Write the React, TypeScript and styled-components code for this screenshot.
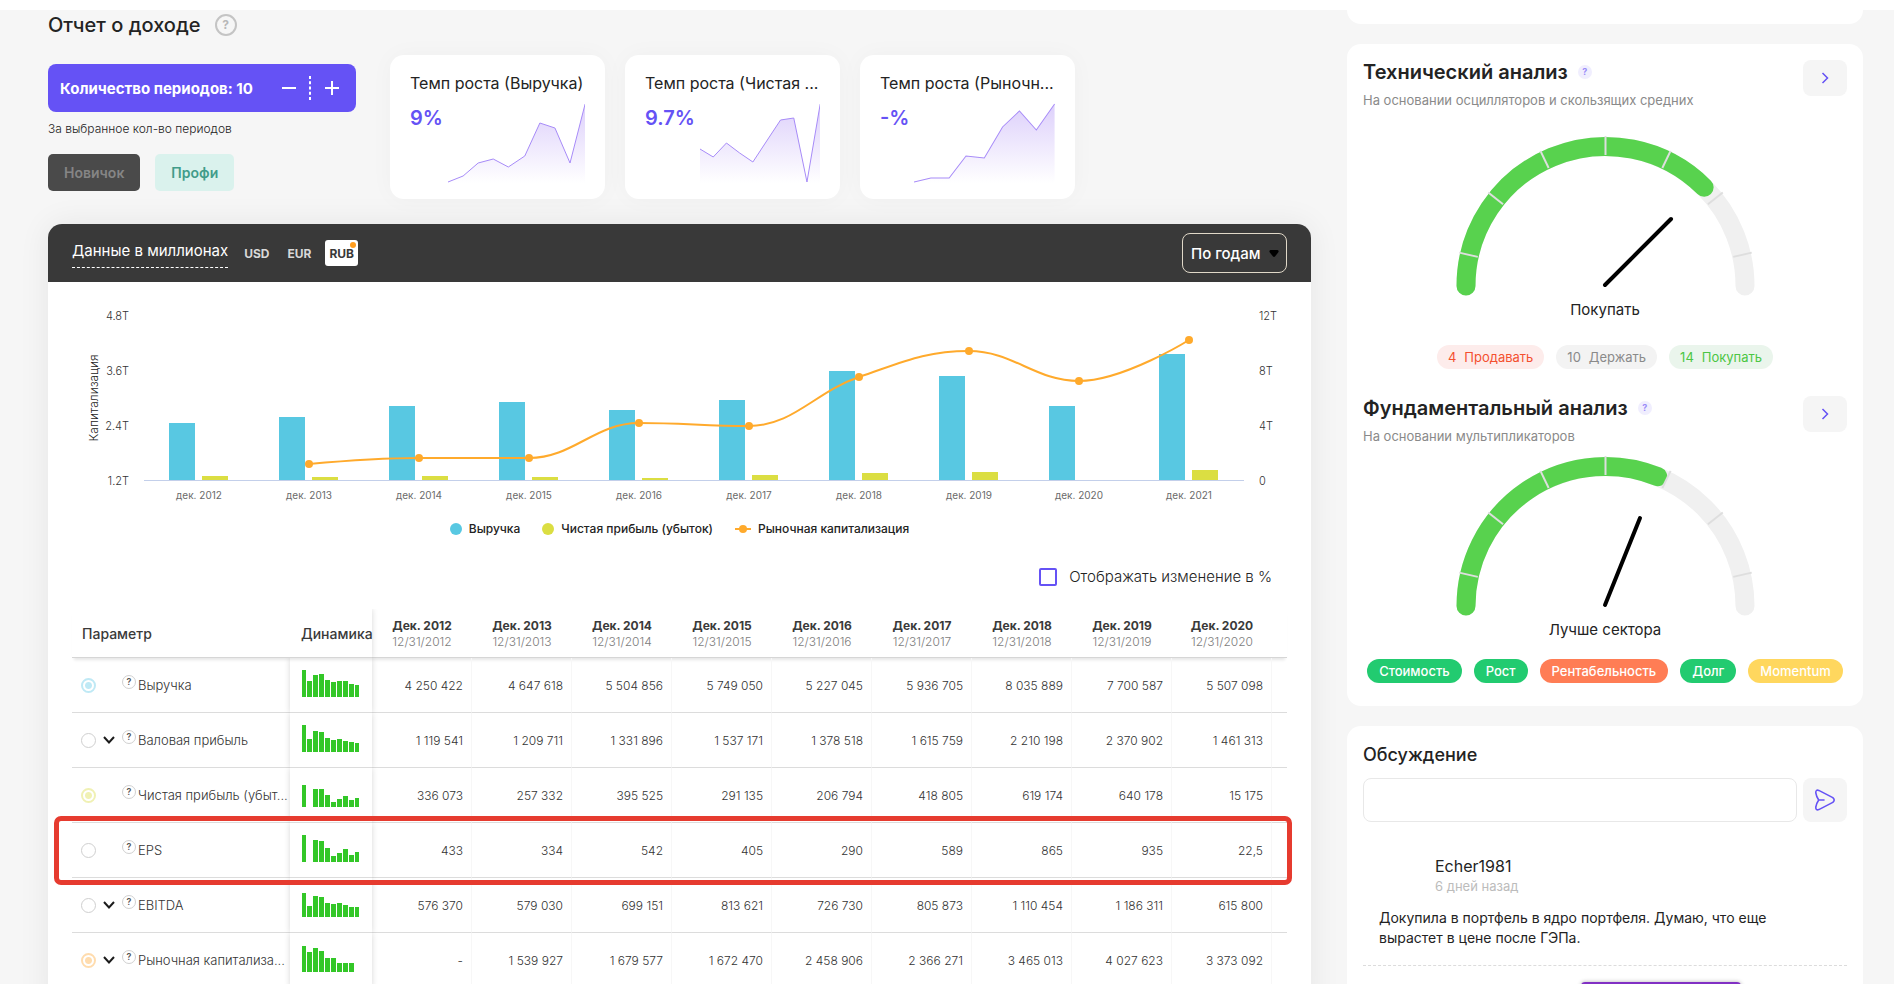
import React from "react";
import styled, { createGlobalStyle } from "styled-components";

const GlobalStyle = createGlobalStyle`
  *, *::before, *::after { box-sizing: border-box; }
  body { margin: 0; background: #f6f6f6; color: #232323; font-family: Inter, "Liberation Sans", sans-serif; }
  button, input, select { font-family: inherit; margin: 0; }
  button { cursor: pointer; border: 0; padding: 0; }
  h1, h2, p { margin: 0; }
`;

const Page = styled.div`
  height: 100vh;
  overflow: hidden;
`;

const TopStrip = styled.div`
  height: 10px;
  background: #fff;
`;

const Columns = styled.div`
  display: grid;
  grid-template-columns: minmax(0, 1fr) 516px;
  column-gap: 36px;
  padding: 0 31px 0 48px;
`;

const Main = styled.main`
  padding-top: 3px;
`;

const TitleRow = styled.div`
  display: flex;
  align-items: center;
  gap: 14px;
  height: 24px;
`;

const PageTitle = styled.h1`
  font-size: 20px;
  font-weight: 500;
  line-height: 24px;
`;

const TitleHelp = styled.button`
  width: 22px;
  height: 22px;
  border: 2px solid #c4c4c4;
  border-radius: 50%;
  background: transparent;
  color: #b8b8b8;
  font-size: 12px;
  font-weight: 700;
  line-height: 18px;
`;

const Controls = styled.section`
  display: flex;
  gap: 34px;
  margin-top: 18px;
`;

const PeriodColumn = styled.div`
  width: 308px;
  flex: none;
  padding-top: 9px;
`;

const Stepper = styled.div`
  display: flex;
  align-items: center;
  height: 48px;
  padding: 0 7px 0 12px;
  border-radius: 8px;
  background: #6552f5;
  color: #fff;
  font-size: 15px;
  font-weight: 700;
`;

const StepperLabel = styled.span`
  flex: 1;
  white-space: nowrap;
`;

const StepButton = styled.button`
  display: grid;
  place-items: center;
  width: 34px;
  height: 34px;
  background: transparent;
`;

const StepDivider = styled.svg`
  margin: 0 4px 0 3px;
`;

const Caption = styled.p`
  margin-top: 9px;
  font-size: 12px;
  font-weight: 300;
  line-height: 16px;
`;

const LevelRow = styled.div`
  display: flex;
  gap: 15px;
  margin-top: 17px;
`;

const LevelButton = styled.button<{ $active?: boolean }>`
  height: 37px;
  padding: 0 16px;
  border-radius: 5px;
  background: ${(p) => (p.$active ? "#4a4a4a" : "#daf2ed")};
  color: ${(p) => (p.$active ? "#858585" : "#429c8a")};
  font-size: 14px;
  font-weight: 600;
`;

const GrowthCards = styled.div`
  display: flex;
  gap: 20px;
`;

const GrowthCard = styled.article`
  display: flex;
  flex-direction: column;
  width: 215px;
  height: 144px;
  padding: 17px 20px 16px;
  border-radius: 14px;
  background: #fff;
  box-shadow: 0 0 24px rgba(0, 0, 0, 0.03);
`;

const GrowthTitle = styled.h2`
  font-size: 16px;
  font-weight: 400;
  line-height: 22px;
  white-space: nowrap;
`;

const GrowthBody = styled.div`
  display: flex;
  gap: 5px;
  margin-top: 9px;
`;

const GrowthValue = styled.span`
  color: #6552f5;
  font-size: 20px;
  font-weight: 600;
  line-height: 30px;
`;

const Sparkline = styled.svg`
  flex: 1;
  min-width: 0;
  height: 80px;
`;

const Panel = styled.section`
  margin-top: 25px;
  border-radius: 14px 14px 0 0;
  background: #fff;
  box-shadow: 0 0 32px rgba(0, 0, 0, 0.07);
`;

const PanelHeader = styled.header`
  display: flex;
  align-items: center;
  height: 58px;
  padding: 0 24px;
  border-radius: 14px 14px 0 0;
  background: #393939;
`;

const UnitLink = styled.a`
  margin-right: 12px;
  padding-bottom: 4px;
  border-bottom: 1px dashed #fff;
  color: #fff;
  font-size: 15px;
  line-height: 24px;
  text-decoration: none;
`;

const CurrencyGroup = styled.div`
  display: flex;
  flex: 1;
  gap: 10px;
`;

const CurrencyButton = styled.button<{ $active?: boolean }>`
  position: relative;
  height: 26px;
  padding: 0 4px;
  border-radius: 3px;
  background: ${(p) => (p.$active ? "#fff" : "transparent")};
  color: ${(p) => (p.$active ? "#393939" : "#d8d8d8")};
  font-size: 12px;
  font-weight: 700;
`;

const CurrencyDot = styled.span`
  position: absolute;
  top: 2px;
  right: 2px;
  width: 6px;
  height: 6px;
  border-radius: 50%;
  background: #ff9d1e;
`;

const SelectWrap = styled.div`
  position: relative;
`;

const PeriodSelect = styled.select`
  appearance: none;
  width: 105px;
  height: 40px;
  padding: 0 8px;
  border: 1px solid #e0d8c8;
  border-radius: 8px;
  background: transparent;
  color: #fff;
  font-size: 15px;
  font-weight: 500;
`;

const SelectArrow = styled.svg`
  position: absolute;
  top: 17px;
  right: 8px;
  pointer-events: none;
`;

const ChartSvg = styled.svg`
  display: block;
  width: 100%;
  height: auto;
  font-family: Inter, "Liberation Sans", sans-serif;
`;

const Legend = styled.div`
  display: flex;
  justify-content: center;
  gap: 22px;
  margin-top: 9px;
  font-size: 12px;
  font-weight: 500;
  line-height: 20px;
`;

const LegendItem = styled.span`
  display: flex;
  align-items: center;
  gap: 7px;
`;

const LegendDot = styled.i<{ $color: string }>`
  width: 12px;
  height: 12px;
  border-radius: 50%;
  background: ${(p) => p.$color};
`;

const ChangeRow = styled.div`
  display: flex;
  justify-content: flex-end;
  margin-top: 28px;
  padding-right: 39px;
`;

const ChangeLabel = styled.label`
  display: flex;
  align-items: center;
  gap: 12px;
  font-size: 15px;
  font-weight: 300;
  line-height: 20px;
`;

const CheckBox = styled.input`
  appearance: none;
  width: 18px;
  height: 18px;
  border: 2px solid #6552f5;
  border-radius: 2px;
  background: #fff;
  &:checked { background: #6552f5; }
`;

const TableWrap = styled.div`
  padding: 22px 24px 24px;
`;

const Table = styled.table`
  width: 100%;
  border-collapse: separate;
  border-spacing: 0;
  table-layout: fixed;
`;

const HeadRow = styled.tr`
  height: 49px;
  box-shadow: 0 4px 3px -2px rgba(0, 0, 0, 0.1);
`;

const HeadCell = styled.th<{ $align?: string; $pad?: string; $shade?: boolean }>`
  padding: ${(p) => p.$pad || "2px 0 0"};
  border-bottom: 1px solid #d6d6d6;
  box-shadow: ${(p) => (p.$shade ? "0 0 6px rgba(0, 0, 0, 0.16)" : "none")};
  clip-path: ${(p) => (p.$shade ? "inset(0 -6px 0 0)" : "none")};
  color: #3a3a3a;
  font-size: 14px;
  font-weight: 500;
  text-align: ${(p) => p.$align || "left"};
  vertical-align: middle;
`;

const YearName = styled.div`
  font-size: 12px;
  font-weight: 700;
  line-height: 16px;
`;

const YearDate = styled.div`
  color: #7d7d7d;
  font-size: 12px;
  font-weight: 300;
  line-height: 16px;
`;

const BodyRow = styled.tr`
  position: relative;
  height: 55px;
`;

const ParamCell = styled.th`
  padding: 0 0 0 9px;
  border-bottom: 1px solid #dcdcdc;
  color: #333;
  font-weight: 300;
  text-align: left;
`;

const ParamContent = styled.div`
  display: flex;
  align-items: center;
`;

const SeriesToggle = styled.input<{ $color: string }>`
  appearance: none;
  flex: none;
  width: 15px;
  height: 15px;
  border: 1px solid #cfcfcf;
  border-radius: 50%;
  background: #fff;
  &:checked {
    border: 2px solid ${(p) => p.$color};
    background: radial-gradient(circle, ${(p) => p.$color} 0 3px, #fff 4px);
  }
`;

const ExpandSlot = styled.span`
  display: flex;
  width: 26px;
  flex: none;
  justify-content: center;
`;

const ExpandButton = styled.button`
  display: grid;
  width: 14px;
  height: 14px;
  place-items: center;
  background: transparent;
`;

const RowHelp = styled.button`
  flex: none;
  width: 14px;
  height: 14px;
  margin: 0 2px 6px 0;
  border: 1px solid #d0d0d0;
  border-radius: 50%;
  background: transparent;
  color: #555;
  font-size: 9px;
  font-weight: 600;
  line-height: 12px;
`;

const ParamName = styled.span`
  font-size: 13px;
  line-height: 18px;
  white-space: nowrap;
`;

const TrendCell = styled.td`
  padding: 0 0 4px 12px;
  border-bottom: 1px solid #dcdcdc;
  box-shadow: 0 0 6px rgba(0, 0, 0, 0.16);
  clip-path: inset(0 -6px);
  line-height: 0;
`;

const ValueCell = styled.td`
  padding: 0 8px 0 0;
  border-right: 1px solid #f7f7f7;
  border-bottom: 1px solid #dcdcdc;
  color: #333;
  font-size: 12px;
  font-weight: 300;
  text-align: right;
`;

const FillCell = styled.td`
  border-bottom: 1px solid #dcdcdc;
`;

const RowFrame = styled.span`
  position: absolute;
  z-index: 1;
  inset: -7px -5px -7px -18px;
  border: 5px solid #e63b2f;
  border-radius: 7px;
  pointer-events: none;
`;

const Aside = styled.aside`
  display: flex;
  flex-direction: column;
  gap: 20px;
`;

const CardTail = styled.div`
  height: 14px;
  border-radius: 0 0 14px 14px;
  background: #fff;
`;

const Card = styled.section`
  padding: 16px 16px 23px;
  border-radius: 14px;
  background: #fff;
`;

const Analysis = styled.div`
  & + & { margin-top: 27px; }
`;

const AnalysisHead = styled.div`
  display: flex;
  justify-content: space-between;
`;

const AnalysisTitle = styled.h2`
  display: flex;
  align-items: center;
  gap: 10px;
  font-size: 20px;
  font-weight: 600;
  line-height: 24px;
`;

const LilacHelp = styled.button`
  width: 14px;
  height: 14px;
  border-radius: 50%;
  background: #f0eefe;
  color: #9a8cf8;
  font-size: 9px;
  font-weight: 700;
  line-height: 14px;
`;

const AnalysisNote = styled.p`
  margin-top: 8px;
  color: #8a8a8a;
  font-size: 13px;
  line-height: 16px;
`;

const SquareButton = styled.button<{ $tall?: boolean }>`
  display: grid;
  flex: none;
  width: 44px;
  height: ${(p) => (p.$tall ? 44 : 36)}px;
  place-items: center;
  border-radius: 8px;
  background: #f5f5f5;
`;

const GaugeSvg = styled.svg<{ $gap: number }>`
  display: block;
  width: 300px;
  height: 160px;
  margin: ${(p) => p.$gap}px auto 0;
`;

const GaugeLabel = styled.p`
  margin-top: 4px;
  font-size: 15px;
  line-height: 20px;
  text-align: center;
`;

const Pills = styled.div<{ $gap: number }>`
  display: flex;
  justify-content: center;
  gap: 12px;
  margin-top: ${(p) => p.$gap}px;
`;

const Pill = styled.span<{ $bg: string; $fg: string; $strong?: boolean }>`
  display: flex;
  gap: 8px;
  padding: 0 ${(p) => (p.$strong ? 12 : 11)}px;
  border-radius: 12px;
  background: ${(p) => p.$bg};
  color: ${(p) => p.$fg};
  font-size: 13px;
  font-weight: ${(p) => (p.$strong ? 500 : 400)};
  line-height: 24px;
`;

const DiscussionTitle = styled.h2`
  margin-top: 1px;
  font-size: 18px;
  font-weight: 500;
  line-height: 24px;
`;

const MessageForm = styled.form`
  display: flex;
  gap: 6px;
  margin-top: 11px;
`;

const MessageInput = styled.input`
  flex: 1;
  min-width: 0;
  height: 44px;
  padding: 0 12px;
  border: 1px solid #e8e8e8;
  border-radius: 8px;
  background: #fff;
  font-size: 15px;
`;

const Comment = styled.article`
  padding: 34px 16px 17px;
  border-bottom: 1px dashed #dcdcdc;
`;

const CommentHead = styled.div`
  padding-left: 56px;
`;

const Author = styled.div`
  font-size: 16px;
  font-weight: 400;
  line-height: 20px;
`;

const When = styled.div`
  color: #bcbcbc;
  font-size: 13px;
  line-height: 20px;
`;

const CommentText = styled.p`
  margin-top: 12px;
  font-size: 14px;
  line-height: 20px;
`;

const MoreButton = styled.button`
  display: block;
  width: 160px;
  height: 40px;
  margin: 16px 106px 0 auto;
  border-radius: 4px;
  background: #8130c4;
  box-shadow: 0 0 4px rgba(0, 0, 0, 0.3);
`;

type Point = [number, number];

const growth: { title: string; value: string; points: Point[] }[] = [
  {
    title: "Темп роста (Выручка)",
    value: "9%",
    points: [[0, 79], [11, 73], [22, 60], [33, 56], [44, 64], [56, 53], [67, 20], [78, 25], [89, 60], [100, 1]],
  },
  {
    title: "Темп роста (Чистая ...",
    value: "9.7%",
    points: [[0, 46], [11, 54], [22, 40], [33, 50], [44, 59], [56, 37], [67, 17], [78, 15], [89, 79], [100, 1]],
  },
  {
    title: "Темп роста (Рыночн...",
    value: "-%",
    points: [[0, 79], [12, 75], [25, 75], [37, 53], [50, 55], [63, 24], [75, 8], [87, 27], [100, 1]],
  },
];

const years = [2012, 2013, 2014, 2015, 2016, 2017, 2018, 2019, 2020, 2021];
const revenueHeights = [57, 63, 74, 78, 70, 80, 109, 104, 74, 126];
const profitHeights = [4, 3, 4, 3, 2, 5, 7, 8, 0, 10];
const capPoints: Point[] = [182, 176, 176, 141, 144, 95, 69, 99, 58].map((y, i) => [261 + i * 110, y]);

/* Smooth curve through all points, with flat tangents kept inside each segment. */
function spline(points: Point[]): string {
  let path = `M${points[0][0]} ${points[0][1]}`;
  let prevRight: Point = points[0];
  for (let i = 1; i < points.length; i++) {
    const [x, y] = points[i];
    let left: Point = [x, y];
    let right: Point = [x, y];
    if (i < points.length - 1) {
      const [lx, ly] = points[i - 1];
      const [nx, ny] = points[i + 1];
      const lcx = (1.5 * x + lx) / 2.5;
      let lcy = (1.5 * y + ly) / 2.5;
      const rcx = (1.5 * x + nx) / 2.5;
      let rcy = (1.5 * y + ny) / 2.5;
      const correction = ((rcy - lcy) * (rcx - x)) / (rcx - lcx) + y - rcy;
      lcy += correction;
      rcy += correction;
      if (lcy > ly && lcy > y) { lcy = Math.max(ly, y); rcy = 2 * y - lcy; }
      else if (lcy < ly && lcy < y) { lcy = Math.min(ly, y); rcy = 2 * y - lcy; }
      if (rcy > ny && rcy > y) { rcy = Math.max(ny, y); lcy = 2 * y - rcy; }
      else if (rcy < ny && rcy < y) { rcy = Math.min(ny, y); lcy = 2 * y - rcy; }
      left = [lcx, lcy];
      right = [rcx, rcy];
    }
    path += ` C${prevRight[0]} ${prevRight[1]} ${left[0]} ${left[1]} ${x} ${y}`;
    prevRight = right;
  }
  return path;
}

type Row = { name: string; color?: string; expand?: boolean; framed?: boolean; trend: number[]; values: string[] };

const rows: Row[] = [
  {
    name: "Выручка", color: "#bfe9f5", trend: [27, 16, 22, 23, 17, 15, 16, 16, 13, 12],
    values: ["4 250 422", "4 647 618", "5 504 856", "5 749 050", "5 227 045", "5 936 705", "8 035 889", "7 700 587", "5 507 098"],
  },
  {
    name: "Валовая прибыль", expand: true, trend: [27, 13, 21, 20, 14, 12, 13, 11, 10, 9],
    values: ["1 119 541", "1 209 711", "1 331 896", "1 537 171", "1 378 518", "1 615 759", "2 210 198", "2 370 902", "1 461 313"],
  },
  {
    name: "Чистая прибыль (убыт...", color: "#f0f1b4", trend: [22, 0, 18, 18, 12, 5, 8, 11, 7, 9],
    values: ["336 073", "257 332", "395 525", "291 135", "206 794", "418 805", "619 174", "640 178", "15 175"],
  },
  {
    name: "EPS", framed: true, trend: [27, 0, 22, 21, 14, 6, 9, 13, 7, 10],
    values: ["433", "334", "542", "405", "290", "589", "865", "935", "22,5"],
  },
  {
    name: "EBITDA", expand: true, trend: [24, 11, 21, 20, 14, 13, 14, 12, 10, 10],
    values: ["576 370", "579 030", "699 151", "813 621", "726 730", "805 873", "1 110 454", "1 186 311", "615 800"],
  },
  {
    name: "Рыночная капитализа...", color: "#ffdcae", expand: true, trend: [26, 20, 24, 21, 14, 14, 9, 9, 9, 0],
    values: ["-", "1 539 927", "1 679 577", "1 672 470", "2 458 906", "2 366 271", "3 465 013", "4 027 623", "3 373 092"],
  },
];

function IncomeChart() {
  return (
    <ChartSvg viewBox="0 0 1263 228" role="img" aria-label="Выручка, чистая прибыль и капитализация">
      <g fontSize="11" fontWeight="300" fill="#333">
        {["4.8T", "3.6T", "2.4T", "1.2T"].map((t, i) => (
          <text key={t} x="81" y={38 + i * 55} textAnchor="end">{t}</text>
        ))}
        {["12T", "8T", "4T", "0"].map((t, i) => (
          <text key={t} x="1211" y={38 + i * 55}>{t}</text>
        ))}
      </g>
      <text transform="translate(50 116) rotate(-90)" textAnchor="middle" fontSize="12" fontWeight="300" fill="#222">
        Капитализация
      </text>
      {years.map((year, i) => (
        <g key={year}>
          <rect x={121 + i * 110} y={198 - revenueHeights[i]} width="26" height={revenueHeights[i]} fill="#58c8e2" />
          <rect x={154 + i * 110} y={198 - profitHeights[i]} width="26" height={profitHeights[i]} fill="#dbde42" />
          <text x={151 + i * 110} y="217" textAnchor="middle" fontSize="10" fill="#6a6a6a">{`дек. ${year}`}</text>
        </g>
      ))}
      <path d="M96 198.500H1196" stroke="#c3cfea" />
      <path d={spline(capPoints)} fill="none" stroke="#ffaa2c" strokeWidth="2" />
      {capPoints.map(([x, y]) => <circle key={x} cx={x} cy={y} r="4" fill="#ffaa2c" />)}
    </ChartSvg>
  );
}

function Gauge({ degrees, needle, gap }: { degrees: number; needle: Point; gap: number }) {
  const at = (deg: number, r: number) => {
    const a = (deg * Math.PI) / 180;
    return `${(150.5 - r * Math.cos(a)).toFixed(2)} ${(150 - r * Math.sin(a)).toFixed(2)}`;
  };
  return (
    <GaugeSvg $gap={gap} viewBox="0 0 300 160" aria-hidden="true">
      <g fill="none" strokeWidth="19" strokeLinecap="round">
        <path d={`M${at(0, 139.5)} A139.500 139.500 0 0 1 ${at(180, 139.5)}`} stroke="#f0f0f0" />
        <path d={`M${at(0, 139.5)} A139.500 139.500 0 0 1 ${at(degrees, 139.5)}`} stroke="#58d24e" />
      </g>
      {[0, 1, 2, 3, 4, 5, 6].map((i) => {
        const deg = (i + 0.5) * (180 / 7);
        return <path key={i} d={`M${at(deg, 131)} L${at(deg, 150)}`} stroke="#dedede" strokeWidth="2" />;
      })}
      <path d={`M150 149L${needle[0]} ${needle[1]}`} stroke="#000" strokeWidth="4" strokeLinecap="round" />
    </GaugeSvg>
  );
}

function ChevronRight() {
  return (
    <svg width="8" height="12" viewBox="0 0 8 12" fill="none" stroke="#6552f5" strokeWidth="1.500" aria-hidden="true">
      <path d="M1.500 1L6.500 6L1.500 11" />
    </svg>
  );
}

function AnalysisHeader({ title, note }: { title: string; note: string }) {
  return (
    <AnalysisHead>
      <div>
        <AnalysisTitle>
          {title}
          <LilacHelp type="button">?</LilacHelp>
        </AnalysisTitle>
        <AnalysisNote>{note}</AnalysisNote>
      </div>
      <SquareButton type="button" aria-label={title}><ChevronRight /></SquareButton>
    </AnalysisHead>
  );
}

export default function App() {
  return (
    <Page>
      <GlobalStyle />
      <TopStrip />
      <Columns>
        <Main>
          <TitleRow>
            <PageTitle>Отчет о доходе</PageTitle>
            <TitleHelp type="button">?</TitleHelp>
          </TitleRow>

          <Controls>
            <PeriodColumn>
              <Stepper>
                <StepperLabel>Количество периодов: 10</StepperLabel>
                <StepButton type="button" aria-label="Меньше">
                  <svg width="14" height="14" stroke="#fff" strokeWidth="2"><path d="M0 7H14" /></svg>
                </StepButton>
                <StepDivider width="2" height="24" aria-hidden="true">
                  <path d="M1 0V24" stroke="#fff" strokeWidth="2" strokeDasharray="3 2.250" />
                </StepDivider>
                <StepButton type="button" aria-label="Больше">
                  <svg width="14" height="14" stroke="#fff" strokeWidth="2"><path d="M0 7H14M7 0V14" /></svg>
                </StepButton>
              </Stepper>
              <Caption>За выбранное кол-во периодов</Caption>
              <LevelRow>
                <LevelButton type="button" $active>Новичок</LevelButton>
                <LevelButton type="button">Профи</LevelButton>
              </LevelRow>
            </PeriodColumn>
            <GrowthCards>
              {growth.map((g, i) => {
                const line = g.points.map((p) => p.join(" ")).join("L");
                return (
                  <GrowthCard key={g.title}>
                    <GrowthTitle>{g.title}</GrowthTitle>
                    <GrowthBody>
                      <GrowthValue>{g.value}</GrowthValue>
                      <Sparkline viewBox="0 0 100 80" preserveAspectRatio="none" aria-hidden="true">
                        <defs>
                          <linearGradient id={`fade${i}`} x1="0" y1="0" x2="0" y2="1">
                            <stop offset="0" stopColor="#ddd0fb" />
                            <stop offset="1" stopColor="#fff" />
                          </linearGradient>
                        </defs>
                        <path d={`M${line}V80H0Z`} fill={`url(#fade${i})`} />
                        <path d={`M${line}`} fill="none" stroke="#a78bf8" vectorEffect="non-scaling-stroke" />
                      </Sparkline>
                    </GrowthBody>
                  </GrowthCard>
                );
              })}
            </GrowthCards>
          </Controls>

          <Panel>
            <PanelHeader>
              <UnitLink href="#units">Данные в миллионах</UnitLink>
              <CurrencyGroup>
                <CurrencyButton type="button">USD</CurrencyButton>
                <CurrencyButton type="button">EUR</CurrencyButton>
                <CurrencyButton type="button" $active>RUB<CurrencyDot /></CurrencyButton>
              </CurrencyGroup>
              <SelectWrap>
                <PeriodSelect aria-label="Период" defaultValue="year">
                  <option value="year">По годам</option>
                </PeriodSelect>
                <SelectArrow width="10" height="7" viewBox="0 0 10 7" aria-hidden="true">
                  <path d="M1.500 0H8.500Q10 .5 9.500 2L6 6.500Q5 7.300 4 6.500L.5 2Q0 .5 1.500 0Z" fill="#000" />
                </SelectArrow>
              </SelectWrap>
            </PanelHeader>

            <IncomeChart />
            <Legend>
              <LegendItem><LegendDot $color="#58c8e2" />Выручка</LegendItem>
              <LegendItem><LegendDot $color="#dbde42" />Чистая прибыль (убыток)</LegendItem>
              <LegendItem>
                <svg width="16" height="10" aria-hidden="true">
                  <path d="M0 5H16" stroke="#ffaa2c" strokeWidth="2" />
                  <circle cx="8" cy="5" r="4" fill="#ffaa2c" />
                </svg>
                Рыночная капитализация
              </LegendItem>
            </Legend>

            <ChangeRow>
              <ChangeLabel><CheckBox type="checkbox" />Отображать изменение в %</ChangeLabel>
            </ChangeRow>

            <TableWrap>
              <Table>
                <colgroup>
                  <col style={{ width: 218 }} />
                  <col style={{ width: 82 }} />
                  {years.slice(0, 9).map((y) => <col key={y} style={{ width: 100 }} />)}
                  <col />
                </colgroup>
                <thead>
                  <HeadRow>
                    <HeadCell $pad="0 0 0 10px">Параметр</HeadCell>
                    <HeadCell $pad="0 0 0 11px" $shade>Динамика</HeadCell>
                    {years.slice(0, 9).map((y) => (
                      <HeadCell key={y} $align="center">
                        <YearName>{`Дек. ${y}`}</YearName>
                        <YearDate>{`12/31/${y}`}</YearDate>
                      </HeadCell>
                    ))}
                    <HeadCell as="td" />
                  </HeadRow>
                </thead>
                <tbody>
                  {rows.map((row) => (
                    <BodyRow key={row.name}>
                      <ParamCell scope="row">
                        <ParamContent>
                          <SeriesToggle type="checkbox" aria-label={row.name} defaultChecked={!!row.color} $color={row.color || "#bfe9f5"} />
                          <ExpandSlot>
                            {row.expand && (
                              <ExpandButton type="button" aria-label="Развернуть">
                                <svg width="12" height="8" fill="none" stroke="#1c1c1c" strokeWidth="2"><path d="M1 1L6 6.500L11 1" /></svg>
                              </ExpandButton>
                            )}
                          </ExpandSlot>
                          <RowHelp type="button">?</RowHelp>
                          <ParamName>{row.name}</ParamName>
                        </ParamContent>
                        {row.framed && <RowFrame />}
                      </ParamCell>
                      <TrendCell>
                        <svg width="58" height="28" fill="#33c728" aria-hidden="true">
                          {row.trend.map((h, i) => (
                            <rect key={i} x={i === 0 ? 0 : i * 6 - 1} y={28 - h} width={i === 0 || i === 9 ? 4 : 5} height={h} />
                          ))}
                        </svg>
                      </TrendCell>
                      {row.values.map((v, i) => <ValueCell key={i}>{v}</ValueCell>)}
                      <FillCell />
                    </BodyRow>
                  ))}
                </tbody>
              </Table>
            </TableWrap>
          </Panel>
        </Main>

        <Aside>
          <CardTail />
          <Card>
            <Analysis>
              <AnalysisHeader title="Технический анализ" note="На основании осцилляторов и скользящих средних" />
              <Gauge degrees={135} needle={[216, 83]} gap={28} />
              <GaugeLabel>Покупать</GaugeLabel>
              <Pills $gap={25}>
                <Pill $bg="#fdeceb" $fg="#f4502f"><span>4</span><span>Продавать</span></Pill>
                <Pill $bg="#f3f3f3" $fg="#8a8a8a"><span>10</span><span>Держать</span></Pill>
                <Pill $bg="#eaf5ec" $fg="#4cc644"><span>14</span><span>Покупать</span></Pill>
              </Pills>
            </Analysis>
            <Analysis>
              <AnalysisHeader title="Фундаментальный анализ" note="На основании мультипликаторов" />
              <Gauge degrees={112} needle={[185, 62]} gap={12} />
              <GaugeLabel>Лучше сектора</GaugeLabel>
              <Pills $gap={19}>
                <Pill $strong $bg="#22cb70" $fg="#fff">Стоимость</Pill>
                <Pill $strong $bg="#22cb70" $fg="#fff">Рост</Pill>
                <Pill $strong $bg="#ff7d55" $fg="#fff">Рентабельность</Pill>
                <Pill $strong $bg="#22cb70" $fg="#fff">Долг</Pill>
                <Pill $strong $bg="#ffd75e" $fg="#fff">Momentum</Pill>
              </Pills>
            </Analysis>
          </Card>
          <Card>
            <DiscussionTitle>Обсуждение</DiscussionTitle>
            <MessageForm onSubmit={(e) => e.preventDefault()}>
              <MessageInput aria-label="Сообщение" />
              <SquareButton $tall type="submit" aria-label="Отправить">
                <svg width="22" height="22" viewBox="0 0 22 22" fill="none" stroke="#6552f5" strokeWidth="1.600" strokeLinecap="round" strokeLinejoin="round">
                  <path d="M4.800 1.400L18.800 8.600Q21.600 11 18.800 13.400L4.800 20.600Q1.600 21.600 1.800 18.200Q2.400 14.300 4.700 11Q2.400 7.700 1.800 3.800Q1.600 .4 4.800 1.400ZM4.700 11H10" />
                </svg>
              </SquareButton>
            </MessageForm>
            <Comment>
              <CommentHead>
                <Author>Echer1981</Author>
                <When>6 дней назад</When>
              </CommentHead>
              <CommentText>Докупила в портфель в ядро портфеля. Думаю, что еще вырастет в цене после ГЭПа.</CommentText>
            </Comment>
            <MoreButton type="button" aria-label="Показать ещё" />
          </Card>
        </Aside>
      </Columns>
    </Page>
  );
}
